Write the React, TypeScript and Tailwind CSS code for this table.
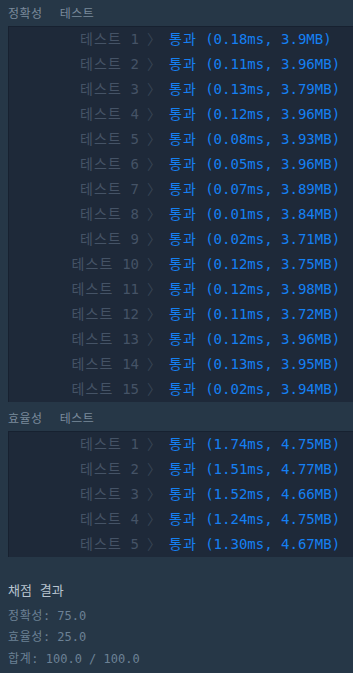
import React from "react";

const acc = [
  ["0.18ms", "3.9MB"],
  ["0.11ms", "3.96MB"],
  ["0.13ms", "3.79MB"],
  ["0.12ms", "3.96MB"],
  ["0.08ms", "3.93MB"],
  ["0.05ms", "3.96MB"],
  ["0.07ms", "3.89MB"],
  ["0.01ms", "3.84MB"],
  ["0.02ms", "3.71MB"],
  ["0.12ms", "3.75MB"],
  ["0.12ms", "3.98MB"],
  ["0.11ms", "3.72MB"],
  ["0.12ms", "3.96MB"],
  ["0.13ms", "3.95MB"],
  ["0.02ms", "3.94MB"],
];

const eff = [
  ["1.74ms", "4.75MB"],
  ["1.51ms", "4.77MB"],
  ["1.52ms", "4.66MB"],
  ["1.24ms", "4.75MB"],
  ["1.30ms", "4.67MB"],
];

const mono = "font-['DejaVu_Sans_Mono','Noto_Sans_CJK_KR',monospace]";

function Rows({ data }: { data: string[][] }) {
  return (
    <div className="ml-[8px] bg-[#1e2939] border-t border-l border-[#172130]">
      {data.map((d, i) => (
        <div key={i} className={`flex items-center h-[25px] text-[14px] whitespace-pre ${mono}`}>
          <span className="w-[130px] text-right text-[#455366]">
            <span className="tracking-[1.2px]">테스트</span>
            {` ${i + 1}`}
          </span>
          <span className="ml-[8px] text-[#374454]">〉</span>
          <span className="ml-[8px] text-[#1580f3]">
            <span className="tracking-[1px]">통과</span>
            {` (${d[0]}, ${d[1]})`}
          </span>
        </div>
      ))}
    </div>
  );
}

function Header({ a }: { a: string }) {
  return (
    <div className="flex items-center h-[26px] pl-[8px] text-[12px] tracking-[0.5px] text-[#7a8a9b] font-['Noto_Sans_CJK_KR',sans-serif]">
      <span>{a}</span>
      <span className="ml-[17px]">테스트</span>
    </div>
  );
}

function Score({ k, v }: { k: string; v: string }) {
  return (
    <div className="h-[21.5px] flex items-center text-[12px] text-[#6c8195] whitespace-pre">
      <span className="tracking-[0.6px]">{k}</span>
      <span>{`: ${v}`}</span>
    </div>
  );
}

export default function App() {
  return (
    <div className="w-[353px] h-[673px] bg-[#263747] overflow-hidden">
      <Header a="정확성" />
      <Rows data={acc} />
      <div className="h-[3px]" />
      <Header a="효율성" />
      <Rows data={eff} />
      <div className={`pl-[8px] pt-[23px] ${mono}`}>
        <div className="h-[22px] flex items-center text-[13px] text-[#b8c4cf]">채점 결과</div>
        <div className="h-[3px]" />
        <Score k="정확성" v="75.0" />
        <Score k="효율성" v="25.0" />
        <Score k="합계" v="100.0 / 100.0" />
      </div>
    </div>
  );
}
